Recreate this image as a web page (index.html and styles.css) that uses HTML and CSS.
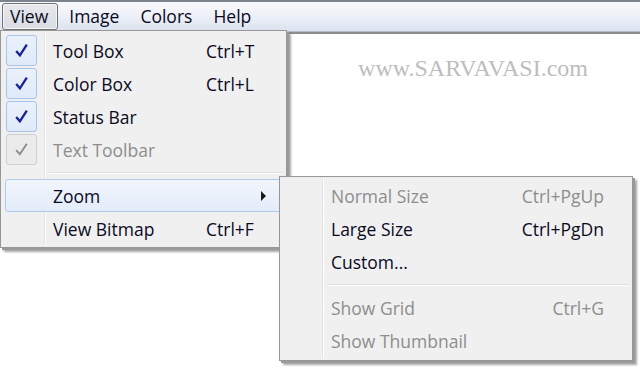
FILE: index.html
```html
<!DOCTYPE html>
<html>
<head>
<meta charset="utf-8">
<link rel="stylesheet" href="styles.css">
</head>
<body>
<div class="window">
  <div class="topline"></div>
  <div class="menubar">
    <span class="mb-item active">View</span>
    <span class="mb-item">Image</span>
    <span class="mb-item">Colors</span>
    <span class="mb-item">Help</span>
  </div>
  <div class="content">
    <div class="watermark">www.SARVAVASI.com</div>
  </div>

  <div class="menu main-menu">
    <div class="gutter-line"></div>
    <div class="row"><span class="check"><svg viewBox="0 0 16 16"><path d="M3 8.5 L6.5 12.5 L13 2.5" /></svg></span><span class="label">Tool Box</span><span class="key">Ctrl+T</span></div>
    <div class="row"><span class="check"><svg viewBox="0 0 16 16"><path d="M3 8.5 L6.5 12.5 L13 2.5" /></svg></span><span class="label">Color Box</span><span class="key">Ctrl+L</span></div>
    <div class="row"><span class="check"><svg viewBox="0 0 16 16"><path d="M3 8.5 L6.5 12.5 L13 2.5" /></svg></span><span class="label">Status Bar</span><span class="key"></span></div>
    <div class="row disabled"><span class="check grey"><svg viewBox="0 0 16 16"><path d="M3 8.5 L6.5 12.5 L13 2.5" /></svg></span><span class="label">Text Toolbar</span><span class="key"></span></div>
    <div class="sep"></div>
    <div class="row hl"><span class="nocheck"></span><span class="label">Zoom</span><span class="arrow"></span></div>
    <div class="row"><span class="nocheck"></span><span class="label">View Bitmap</span><span class="key">Ctrl+F</span></div>
  </div>

  <div class="menu sub-menu">
    <div class="gutter-line"></div>
    <div class="row disabled"><span class="label">Normal Size</span><span class="key">Ctrl+PgUp</span></div>
    <div class="row"><span class="label">Large Size</span><span class="key">Ctrl+PgDn</span></div>
    <div class="row"><span class="label">Custom...</span><span class="key"></span></div>
    <div class="sep"></div>
    <div class="row disabled"><span class="label">Show Grid</span><span class="key">Ctrl+G</span></div>
    <div class="row disabled"><span class="label">Show Thumbnail</span><span class="key"></span></div>
  </div>
</div>
</body>
</html>
```
FILE: styles.css
```css
html, body {
  margin: 0;
  padding: 0;
  background: #ffffff;
}
body {
  width: 640px;
  height: 368px;
  overflow: hidden;
  font-family: "Open Sans", "Noto Sans", sans-serif;
  font-size: 17.5px;
  color: #0a0a1e;
}
.window {
  position: relative;
  width: 640px;
  height: 368px;
  display: flex;
  flex-direction: column;
}
.topline {
  height: 2px;
  background: #7d838d;
}
.menubar {
  height: 29px;
  background: linear-gradient(#f8f9fc 0%, #eef1f8 45%, #dbe2ef 100%);
  display: flex;
  align-items: center;
  padding-left: 2px;
  box-sizing: border-box;
}
.mb-item {
  padding: 0 9px 0 7px;
  line-height: 25px;
  height: 25px;
  margin-right: 3px;
  border: 1px solid transparent;
}
.mb-item.active {
  border: 1px solid #6f7277;
  border-radius: 3px;
  background: linear-gradient(#e6e8ec, #d9dce2);
  box-shadow: inset 0 0 0 1px #f4f5f7;
}
.content {
  flex: 1;
  border-top: 1px solid #b8bcc4;
  box-shadow: inset 0 2px 0 #8a8c90;
  background: #ffffff;
  display: flex;
  justify-content: flex-end;
}
.watermark {
  font-family: "Liberation Serif", "Times New Roman", serif;
  font-size: 24px;
  color: #bdbdbd;
  margin: 23px 52px 0 0;
  height: 30px;
}

.menu {
  position: absolute;
  background: #f0f0f0;
  border: 1px solid #979797;
  box-shadow: 2px 2px 0 #9a9a9a, 4px 4px 2px rgba(0,0,0,0.35);
  box-sizing: border-box;
  display: flex;
  flex-direction: column;
}
.main-menu {
  left: 0;
  top: 30px;
  width: 287px;
  height: 218px;
  padding: 3px 1px 3px 4px;
}
.sub-menu {
  left: 279px;
  top: 176px;
  width: 354px;
  height: 185px;
  padding: 3px 1px 3px 4px;
}
.gutter-line {
  position: absolute;
  top: 2px;
  bottom: 2px;
  left: 43px;
  width: 1px;
  background: #e2e3e3;
  border-right: 1px solid #ffffff;
}
.row {
  height: 33px;
  display: flex;
  align-items: center;
  position: relative;
  box-sizing: border-box;
  border: 1px solid transparent;
}
.check, .nocheck {
  width: 31px;
  height: 31px;
  box-sizing: border-box;
  margin-right: 16px;
  flex: none;
  display: flex;
  align-items: center;
  justify-content: center;
}
.check {
  border: 1px solid #a9c4ea;
  border-radius: 3px;
  background: linear-gradient(#eaf1fb, #dfe9f8);
}
.check svg {
  width: 17px;
  height: 17px;
  fill: none;
  stroke: #1a2396;
  stroke-width: 2.2;
}
.check.grey {
  border-color: #cfcfcf;
  background: #ebebeb;
}
.check.grey svg {
  stroke: #8a8a8a;
  stroke-width: 1.7;
}
.label {
  flex: 1;
}
.key {
  width: 60px;
  margin-right: 18px;
  text-align: left;
}
.disabled {
  color: #8d8d8d;
}
.sep {
  height: 13px;
  position: relative;
  flex: none;
}
.sep::after {
  content: "";
  position: absolute;
  left: 44px;
  right: 2px;
  top: 6px;
  height: 1px;
  background: #e0e0e0;
  border-bottom: 1px solid #ffffff;
}
.row.hl {
  background: linear-gradient(#f2f6fd, #e3ecf9);
  border: 1px solid #aecbee;
  border-radius: 3px;
}
.arrow {
  width: 0;
  height: 0;
  border-top: 5px solid transparent;
  border-bottom: 5px solid transparent;
  border-left: 5px solid #1a1a1a;
  margin-right: 18px;
}
.sub-menu .row {
  padding-left: 46px;
}
.sub-menu .gutter-line {
  left: 42px;
}
.sub-menu .key {
  width: 110px;
  margin-right: 26px;
  text-align: right;
}
.sub-menu .sep::after {
  left: 43px;
}
```
